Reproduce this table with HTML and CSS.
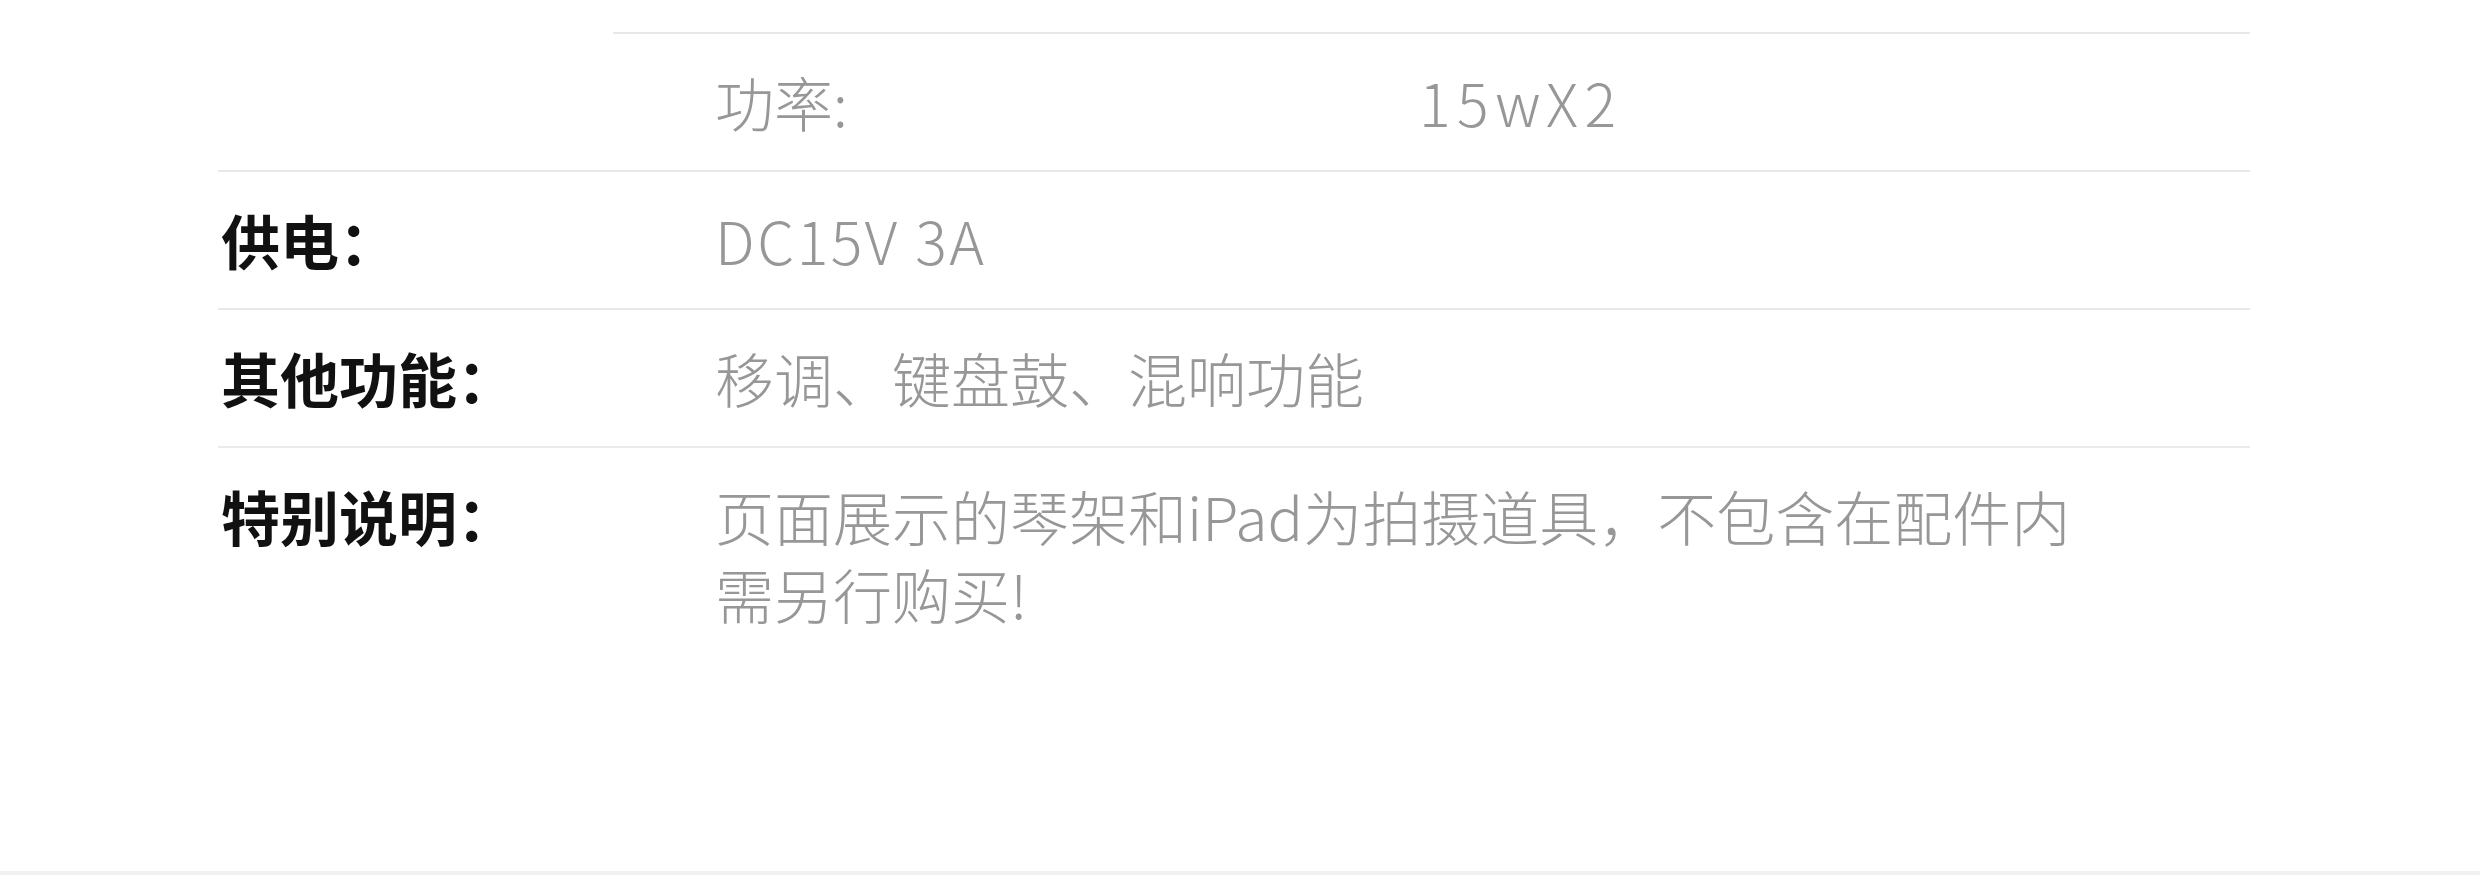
FILE: index.html
```html
<!DOCTYPE html>
<html lang="zh-CN">
<head>
  <meta charset="UTF-8" />
  <meta name="viewport" content="width=device-width, initial-scale=1.0"/>
  <title>产品参数</title>
  <link rel="stylesheet" href="styles.css">
</head>
<body>

  <div class="spec">
    <div class="sub-row">
      <span class="sub-label">功率:</span>
      <span class="value wide">15wX2</span>
    </div>
    <div class="row">
      <span class="label">供电：</span>
      <span class="value latin">DC15V 3A</span>
    </div>
    <div class="row">
      <span class="label">其他功能：</span>
      <span class="value">移调、键盘鼓、混响功能</span>
    </div>
    <div class="row last">
      <span class="label">特别说明：</span>
      <span class="value">页面展示的琴架和iPad为拍摄道具，不包含在配件内<br>需另行购买!</span>
    </div>
  </div>

  <div class="divider"></div>

</body>
</html>
```

FILE: styles.css
```css
* { box-sizing: border-box; margin: 0; padding: 0; }

body {
  font-family: "Noto Sans CJK SC", "Noto Sans", sans-serif;
  background-color: #fff;
  color: #111;
}

.spec {
  padding: 32px 230px 209px 218px;
}

.row,
.sub-row {
  display: grid;
  align-items: start;
  border-top: 2px solid #e8e8e8;
  padding: 29px 0;
  font-size: 59px;
  line-height: 78px;
}

.row {
  grid-template-columns: 497px 1fr;
}

.row.last {
  border-top-color: #ebebeb;
}

/* 上一项下的子参数, 缩进显示 */
.sub-row {
  margin-left: 395px;
  grid-template-columns: 704px 1fr;
  padding-left: 102px;
}

.label {
  padding-left: 3px;
  font-weight: 700;
  color: #111;
}

.sub-label,
.value {
  font-weight: 300;
  color: #979797;
}

.value.latin {
  letter-spacing: 2.5px;
}

.value.wide {
  letter-spacing: 6.5px;
}

.divider {
  height: 4px;
  background-color: #f1f1f1;
}
```
